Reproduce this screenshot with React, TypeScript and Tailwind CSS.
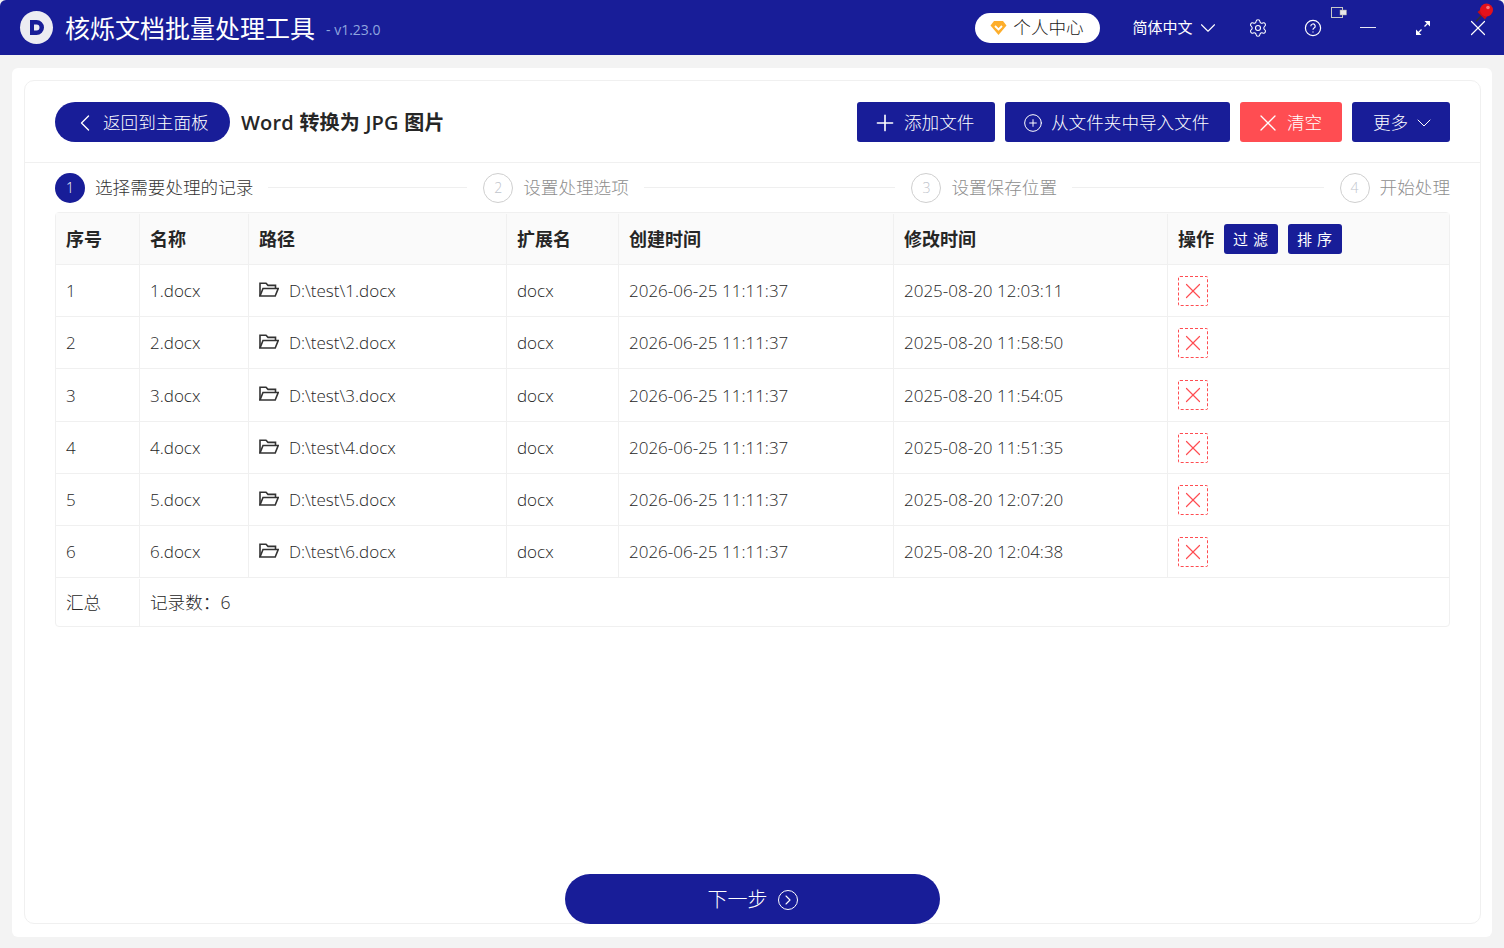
import { ChevronDown, ChevronLeft, ChevronRight, CirclePlus, Plus, Settings, X } from "lucide-react";

const font = "font-['Open_Sans','Noto_Sans_CJK_SC',sans-serif]";

const rows = [
  { id: 1, modified: "2025-08-20 12:03:11", h: "h-[52px]" },
  { id: 2, modified: "2025-08-20 11:58:50", h: "h-[52px]" },
  { id: 3, modified: "2025-08-20 11:54:05", h: "h-[53px]" },
  { id: 4, modified: "2025-08-20 11:51:35", h: "h-[52px]" },
  { id: 5, modified: "2025-08-20 12:07:20", h: "h-[52px]" },
  { id: 6, modified: "2025-08-20 12:04:38", h: "h-[52px]" },
];

const steps = [
  { n: 2, label: "设置处理选项", line: true },
  { n: 3, label: "设置保存位置", line: true },
  { n: 4, label: "开始处理", line: false },
];

const gridCols = "grid grid-cols-[84px_109px_258px_112px_275px_274px_1fr]";
const cell = "flex items-center border-r border-[#f0f0f0] px-[10px]";

function TitleBar() {
  return (
    <header className="relative flex h-[55px] items-center rounded-t-md bg-[#181d98] pl-5 text-white">
      <div className="flex h-[33px] w-[33px] items-center justify-center rounded-full bg-[#ececf2]">
        <svg width="19" height="19" viewBox="0 0 19 19">
          <path d="M3 2h6.5a7.5 7.5 0 0 1 0 15H3z" fill="#181d98" />
          <path d="M7 6.5h2.5a3 3 0 0 1 0 6H7z" fill="#ececf2" />
        </svg>
      </div>
      <h1 className="mt-[2px] ml-[12px] text-[25px] leading-none font-normal">核烁文档批量处理工具</h1>
      <span className="mt-[3px] ml-[11px] text-[14px] text-[#8fa6df]">- v1.23.0</span>

      <div className="ml-[594px] flex h-[30px] w-[125px] items-center justify-center gap-[6px] rounded-full bg-white text-[17.6px] font-light text-[#222]">
        <svg width="17" height="14" viewBox="0 0 16 14">
          <path d="M3.5 0h9L16 4.5 8 14 0 4.5z" fill="#fdae2b" />
          <path d="M4.5 5 8 8.5 11.5 5" fill="none" stroke="#fff" strokeWidth="1.8" />
        </svg>
        个人中心
      </div>
      <div className="ml-[33px] flex items-center gap-[2px] text-[15px]">
        简体中文
        <ChevronDown size={26} strokeWidth={1} />
      </div>
      <Settings size={20} strokeWidth={1.3} className="ml-[27px]" />
      <svg width="18" height="18" viewBox="0 0 18 18" fill="none" stroke="#fff" strokeWidth="1.2" className="ml-[36px]">
        <circle cx="9" cy="9" r="7.6" />
        <path d="M6.8 7.2a2.2 2.2 0 1 1 3.3 1.9c-.7.4-1.1.8-1.1 1.6" />
        <path d="M9 12.4v1.2" />
      </svg>
      <div className="ml-[38px] h-[1.5px] w-[16px] bg-[#e8e8f4]" />
      <svg width="14" height="14" viewBox="0 0 14 14" className="ml-[40px]">
        <path d="M2 12 5.5 8.5M12 2 8.5 5.5" stroke="#fff" strokeWidth="1.3" fill="none" />
        <path d="M14 0H8.5L14 5.5zM0 14h5.5L0 8.5z" fill="#fff" />
      </svg>
      <X size={26} strokeWidth={1.1} className="ml-[35px]" />

      {/* tray overlays */}
      <svg width="16" height="11" viewBox="0 0 16 11" className="absolute top-[7px] left-[1331px]">
        <rect x="0.5" y="0.5" width="11" height="10" fill="#181d98" stroke="#c8c8c8" />
        <rect x="9" y="3" width="6.5" height="5" fill="#e8e8e8" stroke="#999" strokeWidth="0.5" />
      </svg>
      <svg width="19" height="19" viewBox="0 0 19 19" className="absolute top-[3px] left-[1475px]">
        <path d="M1 18.5 6 13" stroke="#333" strokeWidth="1.5" />
        <path d="M2.5 9 10 16.5 13 12 7 5.5z" fill="#c60d16" />
        <circle cx="11.5" cy="7" r="6.5" fill="#e3111b" />
        <circle cx="13" cy="4.5" r="1.8" fill="#f8777c" />
      </svg>
    </header>
  );
}

function Toolbar() {
  const btn = "flex h-10 items-center rounded-[3px] pt-[2px] text-[17.6px] font-light text-white";
  return (
    <div className="flex h-[82px] items-center border-b border-[#f0f0f0] px-[30px]">
      <button className="flex h-10 w-[175px] items-center rounded-full bg-[#181d98] pt-[2px] pl-[16px] text-[17.6px] font-light text-white">
        <ChevronLeft size={28} strokeWidth={1.2} />
        <span className="ml-[4px]">返回到主面板</span>
      </button>
      <div className="mt-[3px] ml-[11px] text-[20px] font-semibold tracking-[0.2px] text-[#262626]">Word 转换为 JPG 图片</div>
      <div className="ml-auto flex gap-[10px]">
        <button className={`${btn} w-[138px] gap-[6px] bg-[#181d98] pl-[15px]`}>
          <Plus size={26} strokeWidth={1.5} />
          添加文件
        </button>
        <button className={`${btn} w-[225px] gap-[8px] bg-[#181d98] pl-[18px]`}>
          <CirclePlus size={20} strokeWidth={1.2} />
          从文件夹中导入文件
        </button>
        <button className={`${btn} w-[102px] gap-[5px] bg-[#ff4d52] pl-[14px]`}>
          <X size={28} strokeWidth={1.1} />
          清空
        </button>
        <button className={`${btn} w-[98px] gap-[4px] bg-[#181d98] pl-[21px]`}>
          更多
          <ChevronDown size={24} strokeWidth={1} />
        </button>
      </div>
    </div>
  );
}

function Stepper() {
  return (
    <div className="flex h-[49px] items-center px-[30px] text-[17.6px] font-light">
      <div className="flex flex-1 items-center">
        <span className="flex h-[30px] w-[30px] shrink-0 items-center justify-center rounded-full bg-[#181d98] text-[14px] text-white">1</span>
        <span className="ml-[10px] whitespace-nowrap text-[#333]">选择需要处理的记录</span>
        <div className="mr-[16px] ml-[15px] h-px flex-1 bg-[#efefef]" />
      </div>
      {steps.map((s) => (
        <div key={s.n} className={s.line ? "flex flex-1 items-center" : "flex items-center"}>
          <span className="flex h-[30px] w-[30px] shrink-0 items-center justify-center rounded-full border border-[#cfcfcf] text-[14px] text-[#c0c4cc]">{s.n}</span>
          <span className="ml-[10px] whitespace-nowrap text-[#8e8e8e]">{s.label}</span>
          {s.line && <div className="mr-[16px] ml-[15px] h-px flex-1 bg-[#efefef]" />}
        </div>
      ))}
    </div>
  );
}

function FolderIcon() {
  return (
    <svg width="20" height="15" viewBox="0 0 20 15" fill="none" stroke="#333" strokeWidth="1.6" className="-mt-[4px] shrink-0">
      <path d="M1 14V1.2h6l2 2.2h7.5v3" />
      <path d="M1 14 4 6.5h15.2L16.2 14z" />
    </svg>
  );
}

function FileTable() {
  const head = ["序号", "名称", "路径", "扩展名", "创建时间", "修改时间"];
  const smallBtn = "ml-[10px] h-[30px] w-[54px] rounded-[3px] bg-[#181d98] pl-[4px] text-[15px] font-normal tracking-[5px] text-white";
  return (
    <div className="mx-[30px] rounded-[4px] border border-[#f0f0f0] text-[17px] font-light text-[#262626]">
      <div className={`${gridCols} h-[52px] border-b border-[#f0f0f0] bg-[#fafafa] pt-px text-[18px] font-semibold text-[#262626]`}>
        {head.map((h) => (
          <div key={h} className={cell}>{h}</div>
        ))}
        <div className="flex items-center px-[10px]">
          操作
          <button className={smallBtn}>过滤</button>
          <button className={smallBtn}>排序</button>
        </div>
      </div>
      {rows.map((r) => (
        <div key={r.id} className={`${gridCols} ${r.h} border-b border-[#f0f0f0]`}>
          <div className={`${cell} pt-px`}>{r.id}</div>
          <div className={`${cell} pt-px`}>{r.id}.docx</div>
          <div className={`${cell} pt-px`}>
            <FolderIcon />
            <span className="ml-[10px]">D:\test\{r.id}.docx</span>
          </div>
          <div className={`${cell} pt-px`}>docx</div>
          <div className={`${cell} pt-px`}>2026-06-25 11:11:37</div>
          <div className={`${cell} pt-px`}>{r.modified}</div>
          <div className="flex items-center px-[10px]">
            <span className="flex h-[30px] w-[30px] items-center justify-center rounded-[2px] border border-dashed border-[#ff4d52]">
              <X size={26} strokeWidth={1.1} className="shrink-0 text-[#ff4d52]" />
            </span>
          </div>
        </div>
      ))}
      <div className="grid h-[48px] grid-cols-[84px_1fr] pt-px text-[17.6px]">
        <div className={cell}>汇总</div>
        <div className="flex items-center px-[10px]">记录数：6</div>
      </div>
    </div>
  );
}

export default function App() {
  return (
    <div className={`${font} flex h-[948px] w-[1504px] flex-col overflow-hidden bg-[#f3f3f3]`}>
      <TitleBar />
      <main className="mx-3 mt-[13px] mb-[11px] flex-1 rounded-md bg-white pt-3 pr-[11px] pb-[13px] pl-3">
        <div className="flex h-full flex-col rounded-[10px] border border-[#f0f0f0]">
          <Toolbar />
          <Stepper />
          <FileTable />
          <button className="mx-auto mt-auto -mb-px flex h-[50px] w-[375px] items-center justify-center gap-[10px] rounded-full bg-[#181d98] pt-[2px] text-[20px] font-light text-white">
            下一步
            <span className="flex h-[20px] w-[20px] items-center justify-center rounded-full border-[1.5px] border-white">
              <ChevronRight size={16} strokeWidth={1.6} />
            </span>
          </button>
        </div>
      </main>
    </div>
  );
}
